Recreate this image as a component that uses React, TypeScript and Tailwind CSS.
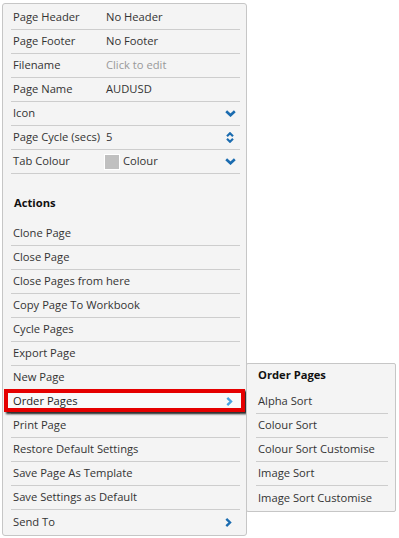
import React from 'react'

const props = [
  { label: 'Page Header', value: 'No Header' },
  { label: 'Page Footer', value: 'No Footer' },
  { label: 'Filename', value: 'Click to edit', muted: true },
  { label: 'Page Name', value: 'AUDUSD' },
  { label: 'Icon', value: '', icon: 'down' },
  { label: 'Page Cycle (secs)', value: '5', icon: 'updown' },
  { label: 'Tab Colour', value: 'Colour', icon: 'down', swatch: true },
]

const actions = [
  'Clone Page',
  'Close Page',
  'Close Pages from here',
  'Copy Page To Workbook',
  'Cycle Pages',
  'Export Page',
  'New Page',
  'Order Pages',
  'Print Page',
  'Restore Default Settings',
  'Save Page As Template',
  'Save Settings as Default',
  'Send To',
]

const subItems = ['Alpha Sort', 'Colour Sort', 'Colour Sort Customise', 'Image Sort', 'Image Sort Customise']

function ChevronDown() {
  return (
    <svg width="11" height="7" viewBox="0 0 11 7" className="mr-[4px]">
      <path d="M1.2 1.2 L5.5 5.3 L9.8 1.2" fill="none" stroke="#1b6cb0" strokeWidth="2.6" />
    </svg>
  )
}

function UpDown() {
  return (
    <svg width="8" height="11" viewBox="0 0 8 11" className="mr-[6px]">
      <path d="M1 4.3 L4 1.3 L7 4.3" fill="none" stroke="#1b6cb0" strokeWidth="2.2" />
      <path d="M1 6.7 L4 9.7 L7 6.7" fill="none" stroke="#1b6cb0" strokeWidth="2.2" />
    </svg>
  )
}

function ChevronRight({ color }: { color: string }) {
  return (
    <svg width="7" height="9" viewBox="0 0 7 9" className="mr-[8px]">
      <path d="M1.3 0.9 L5 4.5 L1.3 8.1" fill="none" stroke={color} strokeWidth="2.4" />
    </svg>
  )
}

export default function App() {
  return (
    <div className="relative w-[399px] h-[538px] bg-white text-[11.2px] text-[#333] [font-family:'Open_Sans',sans-serif]">
      {/* main panel */}
      <div className="absolute left-[2px] top-[3px] w-[245px] h-[533px] border border-[#c6c6c6] rounded-[3px] bg-[#f4f4f4] pl-[8px] pr-[6px] pt-[2px]">
        {props.map((p) => (
          <div key={p.label} className="flex items-center h-[24px] border-b border-[#cdcdcd] whitespace-nowrap">
            <span className="w-[95px] pl-[2px] shrink-0">{p.label}</span>
            {p.swatch && <span className="w-[16px] h-[16px] bg-[#c0c0c0] border border-white mr-[3px] -ml-[2px]" />}
            <span className={p.muted ? 'flex-1 text-[#999]' : 'flex-1'}>{p.value}</span>
            {p.icon === 'down' && <ChevronDown />}
            {p.icon === 'updown' && <UpDown />}
          </div>
        ))}
        <div className="h-[48px] flex items-center pl-[3px] pt-[16px] pb-[6px] font-bold text-[#111]">Actions</div>
        {actions.map((a, i) => (
          <div
            key={a}
            className={`flex items-center justify-between h-[24px] pl-[2px] ${
              i < actions.length - 1 ? 'border-b border-[#cdcdcd]' : ''
            }`}
          >
            <span>{a}</span>
            {a === 'Send To' && <ChevronRight color="#1b6cb0" />}
          </div>
        ))}
      </div>

      {/* highlight annotation */}
      <div className="absolute left-[4px] top-[389px] w-[241px] h-[23px] border-[4px] border-[#e50000] bg-[#f9f9f9] shadow-[2px_2px_2px_rgba(0,0,0,0.85)] flex items-center justify-between pl-[5px] pt-[1px]">
        <span className="text-[#222]">Order Pages</span>
        <ChevronRight color="#4aa3df" />
      </div>

      {/* submenu */}
      <div className="absolute left-[246px] top-[363px] w-[150px] h-[149px] border border-[#c6c6c6] rounded-[2px] bg-[#f4f4f4] pl-[9px] pr-[7px]">
        <div className="h-[26px] flex items-center pl-[2px] pb-[4px] font-bold text-[#111]">Order Pages</div>
        {subItems.map((s, i) => (
          <div
            key={s}
            className={`flex items-center h-[24px] pl-[2px] ${i < subItems.length - 1 ? 'border-b border-[#cdcdcd]' : ''}`}
          >
            {s}
          </div>
        ))}
      </div>
    </div>
  )
}
